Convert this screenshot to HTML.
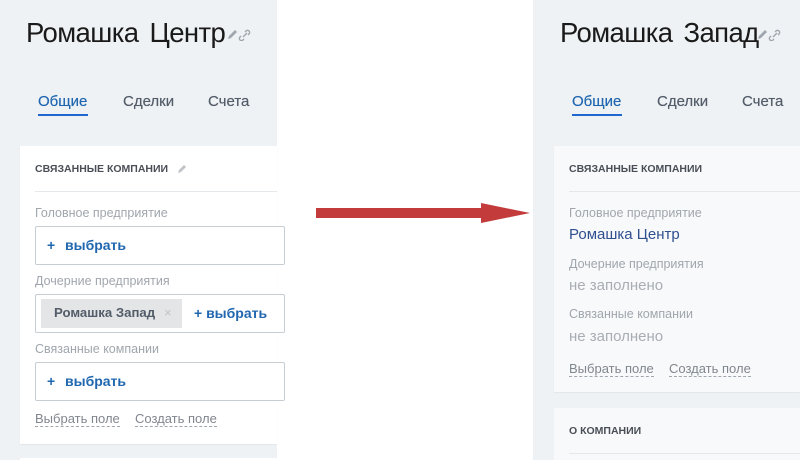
<!DOCTYPE html>
<html><head><meta charset="utf-8"><style>
*{margin:0;padding:0;box-sizing:border-box}
body{width:800px;height:460px;overflow:hidden;background:#fff;font-family:"Liberation Sans",Arial,sans-serif;position:relative}
.a{position:absolute;white-space:nowrap}
.bg{background:#eef2f4}
.title{font-size:27.5px;font-weight:normal;color:#1a1a1a;letter-spacing:-0.6px;word-spacing:4px}
.tab{font-size:15px;color:#535c69;text-shadow:0 0 0.4px #535c69}
.tab.on{color:#2067b0;text-shadow:0 0 0.4px #2067b0}
.hd{font-size:10.5px;font-weight:bold;color:#4a4f57}
.lbl{font-size:12.5px;color:#a0a6ad}
.box{border:1px solid #c6cdd3;border-radius:2px;background:#fff}
.sel{font-size:14px;font-weight:bold;color:#2067b0}
.lnk{font-size:13px;color:#80868e;border-bottom:1px dashed #a0a6ad;line-height:15px}
.line{height:1px;background:#e5e8eb}
.val{font-size:15px;color:#a8adb3}
</style></head><body>
<div class="a bg" style="left:0;top:0;width:277px;height:460px"></div>
<div class="a title" style="left:26px;top:17px">Ромашка Центр</div>
<svg class="a" style="left:226px;top:29px" width="28" height="12" viewBox="0 0 28 12"><path d="M2 10l1-3 6-6 2 2-6 6z" fill="#a0a6ad"/><path d="M17 8l4-4m-2-1l1-1a2 2 0 013 3l-1 1m-4 4l-1 1a2 2 0 01-3-3l1-1" stroke="#a0a6ad" stroke-width="1.4" fill="none"/></svg>
<div class="a tab on" style="left:38px;top:93px">Общие</div>
<div class="a" style="left:38px;top:114px;width:50px;height:2px;background:#2067d0"></div>
<div class="a tab" style="left:123px;top:93px">Сделки</div>
<div class="a tab" style="left:208px;top:93px">Счета</div>
<div class="a" style="left:20px;top:146px;width:257px;height:298px;background:#fff;box-shadow:0 1px 1px rgba(0,0,0,.05)"></div>
<div class="a hd" style="left:35px;top:163px">СВЯЗАННЫЕ КОМПАНИИ</div>
<svg class="a" style="left:177px;top:163px" width="11" height="11"><path d="M1 10l1-3 5-5 2 2-5 5z" fill="#c0c4c8"/></svg>
<div class="a line" style="left:35px;top:191px;width:242px"></div>
<div class="a lbl" style="left:35px;top:206px">Головное предприятие</div>
<div class="a box" style="left:35px;top:226px;width:250px;height:39px"></div>
<div class="a sel" style="left:47px;top:237px">+</div><div class="a sel" style="left:65px;top:237px">выбрать</div>
<div class="a lbl" style="left:35px;top:274px">Дочерние предприятия</div>
<div class="a box" style="left:35px;top:294px;width:250px;height:39px"></div>
<div class="a" style="left:41px;top:299px;width:141px;height:29px;background:#e3e5e7"></div>
<div class="a" style="left:54px;top:305px;font-size:13.2px;font-weight:bold;color:#535c69">Ромашка Запад</div>
<div class="a" style="left:164px;top:305px;font-size:13px;color:#c0c4c8">×</div>
<div class="a sel" style="left:194px;top:305px">+ выбрать</div>
<div class="a lbl" style="left:35px;top:342px">Связанные компании</div>
<div class="a box" style="left:35px;top:362px;width:250px;height:39px"></div>
<div class="a sel" style="left:47px;top:373px">+</div><div class="a sel" style="left:65px;top:373px">выбрать</div>
<div class="a lnk" style="left:35px;top:411px">Выбрать поле</div>
<div class="a lnk" style="left:135px;top:411px">Создать поле</div>
<div class="a" style="left:20px;top:458px;width:257px;height:2px;background:#fff"></div>
<svg class="a" style="left:300px;top:195px" width="235" height="35"><path d="M16 13H181V8L230 18 181 28V23H16z" fill="#c33b3b"/></svg>
<div class="a bg" style="left:533px;top:0;width:267px;height:460px"></div>
<div class="a title" style="left:560px;top:17px">Ромашка Запад</div>
<svg class="a" style="left:756px;top:29px" width="28" height="12" viewBox="0 0 28 12"><path d="M2 10l1-3 6-6 2 2-6 6z" fill="#a0a6ad"/><path d="M17 8l4-4m-2-1l1-1a2 2 0 013 3l-1 1m-4 4l-1 1a2 2 0 01-3-3l1-1" stroke="#a0a6ad" stroke-width="1.4" fill="none"/></svg>
<div class="a tab on" style="left:572px;top:93px">Общие</div>
<div class="a" style="left:572px;top:114px;width:50px;height:2px;background:#2067d0"></div>
<div class="a tab" style="left:657px;top:93px">Сделки</div>
<div class="a tab" style="left:742px;top:93px">Счета</div>
<div class="a" style="left:554px;top:146px;width:246px;height:246px;background:#f8f9fa;box-shadow:0 1px 1px rgba(0,0,0,.05)"></div>
<div class="a hd" style="left:569px;top:163px">СВЯЗАННЫЕ КОМПАНИИ</div>
<div class="a line" style="left:569px;top:191px;width:231px"></div>
<div class="a lbl" style="left:569px;top:206px">Головное предприятие</div>
<div class="a" style="left:569px;top:226px;font-size:15px;color:#2f4f8f">Ромашка Центр</div>
<div class="a lbl" style="left:569px;top:257px">Дочерние предприятия</div>
<div class="a val" style="left:569px;top:277px">не заполнено</div>
<div class="a lbl" style="left:569px;top:307px">Связанные компании</div>
<div class="a val" style="left:569px;top:328px">не заполнено</div>
<div class="a lnk" style="left:569px;top:361px">Выбрать поле</div>
<div class="a lnk" style="left:669px;top:361px">Создать поле</div>
<div class="a" style="left:554px;top:408px;width:246px;height:52px;background:#f8f9fa"></div>
<div class="a hd" style="left:569px;top:425px">О КОМПАНИИ</div>
<div class="a line" style="left:569px;top:453px;width:231px"></div>
</body></html>
